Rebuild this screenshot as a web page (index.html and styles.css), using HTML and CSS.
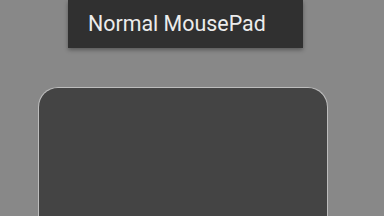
FILE: index.html
```html
<!DOCTYPE html>
<html lang="en">
<head>
    <meta charset="UTF-8" />
    <title>MousePad</title>
    <link rel="stylesheet" href="styles.css">
</head>
<body>
    <!-- Mode title bar -->
    <div class="mode-bar">
        <span class="mode-title">Normal MousePad</span>
    </div>

    <!-- Touch area -->
    <div class="pad"></div>
</body>
</html>
```

FILE: styles.css
```css
/* --- Reset --- */
* {
    margin: 0;
    padding: 0;
    box-sizing: border-box;
}

body {
    font-family: Roboto, "Noto Sans", sans-serif;
    background-color: #888888;
    width: 384px;
    height: 216px;
    overflow: hidden;
}

/* --- Title bar --- */
.mode-bar {
    margin-left: 68px;
    width: 235px;
    height: 48px;
    background-color: #303030;
    box-shadow: 0 2px 4px rgba(0, 0, 0, 0.35);
    padding-left: 20px;
    display: flex;
    align-items: center;
}

.mode-title {
    color: #ececec;
    font-size: 21.4px;
    margin-top: -2px;
}

/* --- Pad --- */
.pad {
    margin-top: 39px;
    margin-left: 38px;
    width: 290px;
    height: 129px;
    background-color: #444444;
    border: 1.5px solid #bdbdbd;
    border-bottom: none;
    border-radius: 20px 20px 0 0;
}
```
